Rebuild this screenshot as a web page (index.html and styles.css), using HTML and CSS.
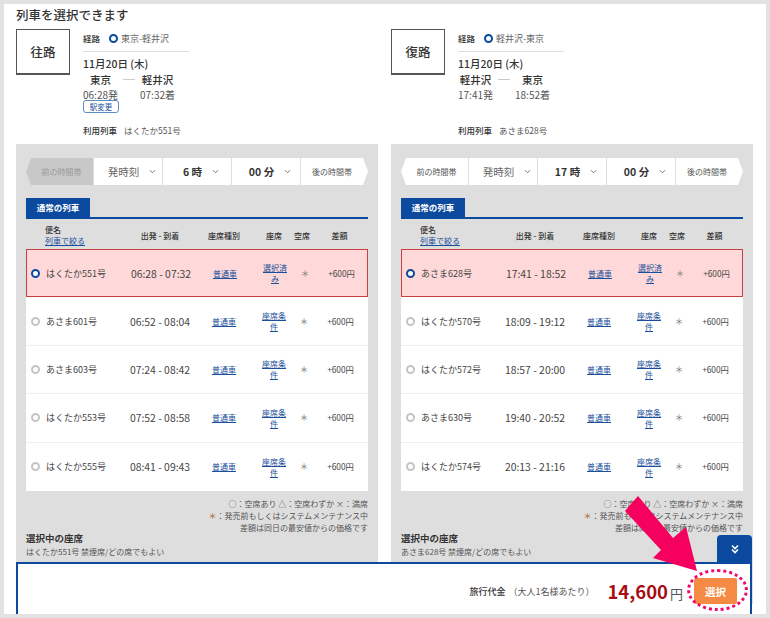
FILE: index.html
```html
<!DOCTYPE html>
<html lang="ja">
<head>
  <meta charset="UTF-8">
  <title>列車を選択できます</title>
  <link rel="stylesheet" href="styles.css">
</head>
<body>
  <div class="page">
    <h1 class="page-title">列車を選択できます</h1>
    <div class="columns">

      <!-- 往路 -->
      <section class="trip">
        <div class="summary">
          <div class="trip-box">往路</div>
          <div class="info">
            <div class="route"><b>経路</b><span class="radio on"></span><span>東京-軽井沢</span></div>
            <div class="date">11月20日 (木)</div>
            <div class="stations">
              <div class="station"><b>東京</b><span>06:28発</span></div>
              <i class="dash"></i>
              <div class="station"><b>軽井沢</b><span>07:32着</span></div>
            </div>
            <div class="change-row"><a class="change">駅変更</a></div>
            <div class="used"><b>利用列車</b><span>はくたか551号</span></div>
          </div>
        </div>
        <div class="panel">
          <div class="time-nav">
            <div class="nav-btn prev off">前の時間帯</div>
            <div class="nav-sel light">発時刻<svg viewBox="0 0 8 5"><path d="M1 1l3 3 3-3"/></svg></div>
            <div class="nav-sel">6 時<svg viewBox="0 0 8 5"><path d="M1 1l3 3 3-3"/></svg></div>
            <div class="nav-sel">00 分<svg viewBox="0 0 8 5"><path d="M1 1l3 3 3-3"/></svg></div>
            <div class="nav-btn next">後の時間帯</div>
          </div>
          <div class="tabs"><div class="tab">通常の列車</div></div>
          <div class="row head">
            <div class="c-name">便名<a>列車で絞る</a></div><div>出発 - 到着</div><div>座席種別</div><div>座席</div><div>空席</div><div>差額</div>
          </div>
          <div class="rows">
            <div class="row train selected">
              <div class="c-name"><span class="radio on"></span>はくたか551号</div><div class="c-time">06:28 - 07:32</div><div><a>普通車</a></div><div class="c-seat"><a>選択済み</a></div><div class="c-mark">＊</div><div class="c-diff">+600円</div>
            </div>
            <div class="row train">
              <div class="c-name"><span class="radio"></span>あさま601号</div><div class="c-time">06:52 - 08:04</div><div><a>普通車</a></div><div class="c-seat"><a>座席条件</a></div><div class="c-mark">＊</div><div class="c-diff">+600円</div>
            </div>
            <div class="row train">
              <div class="c-name"><span class="radio"></span>あさま603号</div><div class="c-time">07:24 - 08:42</div><div><a>普通車</a></div><div class="c-seat"><a>座席条件</a></div><div class="c-mark">＊</div><div class="c-diff">+600円</div>
            </div>
            <div class="row train">
              <div class="c-name"><span class="radio"></span>はくたか553号</div><div class="c-time">07:52 - 08:58</div><div><a>普通車</a></div><div class="c-seat"><a>座席条件</a></div><div class="c-mark">＊</div><div class="c-diff">+600円</div>
            </div>
            <div class="row train">
              <div class="c-name"><span class="radio"></span>はくたか555号</div><div class="c-time">08:41 - 09:43</div><div><a>普通車</a></div><div class="c-seat"><a>座席条件</a></div><div class="c-mark">＊</div><div class="c-diff">+600円</div>
            </div>
          </div>
          <div class="legend">
            <p>○：空席あり △：空席わずか ×：満席</p>
            <p><em>＊</em>：発売前もしくはシステムメンテナンス中</p>
            <p>差額は同日の最安値からの価格です</p>
          </div>
          <div class="current">
            <h3>選択中の座席</h3>
            <p>はくたか551号 禁煙席/どの席でもよい</p>
          </div>
        </div>
      </section>

      <!-- 復路 -->
      <section class="trip">
        <div class="summary">
          <div class="trip-box">復路</div>
          <div class="info">
            <div class="route"><b>経路</b><span class="radio on"></span><span>軽井沢-東京</span></div>
            <div class="date">11月20日 (木)</div>
            <div class="stations">
              <div class="station"><b>軽井沢</b><span>17:41発</span></div>
              <i class="dash"></i>
              <div class="station"><b>東京</b><span>18:52着</span></div>
            </div>
            <div class="change-row"></div>
            <div class="used"><b>利用列車</b><span>あさま628号</span></div>
          </div>
        </div>
        <div class="panel">
          <div class="time-nav">
            <div class="nav-btn prev">前の時間帯</div>
            <div class="nav-sel light">発時刻<svg viewBox="0 0 8 5"><path d="M1 1l3 3 3-3"/></svg></div>
            <div class="nav-sel">17 時<svg viewBox="0 0 8 5"><path d="M1 1l3 3 3-3"/></svg></div>
            <div class="nav-sel">00 分<svg viewBox="0 0 8 5"><path d="M1 1l3 3 3-3"/></svg></div>
            <div class="nav-btn next">後の時間帯</div>
          </div>
          <div class="tabs"><div class="tab">通常の列車</div></div>
          <div class="row head">
            <div class="c-name">便名<a>列車で絞る</a></div><div>出発 - 到着</div><div>座席種別</div><div>座席</div><div>空席</div><div>差額</div>
          </div>
          <div class="rows">
            <div class="row train selected">
              <div class="c-name"><span class="radio on"></span>あさま628号</div><div class="c-time">17:41 - 18:52</div><div><a>普通車</a></div><div class="c-seat"><a>選択済み</a></div><div class="c-mark">＊</div><div class="c-diff">+600円</div>
            </div>
            <div class="row train">
              <div class="c-name"><span class="radio"></span>はくたか570号</div><div class="c-time">18:09 - 19:12</div><div><a>普通車</a></div><div class="c-seat"><a>座席条件</a></div><div class="c-mark">＊</div><div class="c-diff">+600円</div>
            </div>
            <div class="row train">
              <div class="c-name"><span class="radio"></span>はくたか572号</div><div class="c-time">18:57 - 20:00</div><div><a>普通車</a></div><div class="c-seat"><a>座席条件</a></div><div class="c-mark">＊</div><div class="c-diff">+600円</div>
            </div>
            <div class="row train">
              <div class="c-name"><span class="radio"></span>あさま630号</div><div class="c-time">19:40 - 20:52</div><div><a>普通車</a></div><div class="c-seat"><a>座席条件</a></div><div class="c-mark">＊</div><div class="c-diff">+600円</div>
            </div>
            <div class="row train">
              <div class="c-name"><span class="radio"></span>はくたか574号</div><div class="c-time">20:13 - 21:16</div><div><a>普通車</a></div><div class="c-seat"><a>座席条件</a></div><div class="c-mark">＊</div><div class="c-diff">+600円</div>
            </div>
          </div>
          <div class="legend">
            <p>○：空席あり △：空席わずか ×：満席</p>
            <p><em>＊</em>：発売前もしくはシステムメンテナンス中</p>
            <p>差額は同日の最安値からの価格です</p>
          </div>
          <div class="current">
            <h3>選択中の座席</h3>
            <p>あさま628号 禁煙席/どの席でもよい</p>
          </div>
        </div>
      </section>
    </div>

    <!-- 画面下に固定のバー -->
    <div class="toggle"><svg viewBox="0 0 10 10"><path d="M2 1.5l3 3 3-3M2 5.5l3 3 3-3"/></svg></div>
    <div class="price-bar">
      <span class="price-label"><b>旅行代金</b>（大人1名様あたり）</span>
      <span class="price"><b>14,600</b>円</span>
      <button class="select-btn">選択</button>
    </div>
    <div class="ring"></div>
    <svg class="arrow" viewBox="0 0 90 90"><polygon points="11,18 24,3 59,45 72,34 83,78 39,65 47,57"/></svg>
  </div>
</body>
</html>
```

FILE: styles.css
```css
* {
  box-sizing: border-box;
}
html, body {
  margin: 0;
  height: 618px;
  overflow: hidden;
}
body {
  background-color: #e2e2e2;
  font-family: "Noto Sans CJK JP", "Noto Sans", sans-serif;
  color: #333;
  font-size: 10px;
}
p, h1, h3 {
  margin: 0;
}
a {
  color: #1a4f9c;
  text-decoration: underline;
}
.page {
  position: relative;
  margin: 4px;
  height: 610px;
  padding: 0 12px;
  background-color: #fff;
  overflow: hidden;
}
.page-title {
  font-size: 12.5px;
  line-height: 21px;
  font-weight: 500;
  color: #333;
}
.columns {
  display: flex;
  gap: 13px;
}
.trip {
  width: 362px;
}

/* 上の概要 */
.summary {
  display: flex;
  height: 119px;
  padding-top: 4px;
}
.trip-box {
  width: 54px;
  height: 46px;
  border: 1px solid #555;
  border-bottom-width: 2px;
  display: flex;
  align-items: center;
  justify-content: center;
  font-size: 12.5px;
  font-weight: 500;
}
.info {
  margin-left: 13px;
  padding-top: 3px;
}
.route {
  width: 106px;
  height: 20px;
  border-bottom: 1px solid #ddd;
  display: flex;
  align-items: flex-start;
  font-size: 9px;
  line-height: 14px;
  color: #666;
}
.route b {
  color: #333;
  font-weight: 500;
  font-size: 8.5px;
  line-height: 12px;
  width: 26px;
}
.route .radio {
  margin: 2px 3px 0 0;
}
.date {
  margin-top: 4px;
  font-size: 10.5px;
  line-height: 16px;
  font-weight: 500;
}
.stations {
  display: flex;
  align-items: flex-start;
}
.station {
  display: flex;
  flex-direction: column;
  align-items: center;
  width: 35px;
}
.station b {
  font-size: 10.5px;
  line-height: 16px;
  font-weight: 500;
  white-space: nowrap;
}
.station span {
  font-size: 10px;
  line-height: 13px;
  color: #555;
  white-space: nowrap;
}
.dash {
  width: 12px;
  height: 1px;
  margin: 7px 5px 0;
  background-color: #ccc;
}
.change-row {
  height: 14px;
  margin-top: -1px;
}
.change {
  display: block;
  width: 36px;
  height: 13px;
  border: 1px solid #5b8ec9;
  border-radius: 3px;
  text-align: center;
  font-size: 7.5px;
  line-height: 11px;
  color: #1a4f9c;
  text-decoration: none;
}
.used {
  margin-top: 10px;
  font-size: 8.5px;
  line-height: 12px;
  color: #555;
  white-space: nowrap;
}
.used b {
  font-weight: 500;
  color: #333;
  margin-right: 7px;
}

/* グレーのパネル */
.panel {
  height: 460px;
  padding: 14px 10px 0;
  background-color: #dedede;
}
.time-nav {
  display: flex;
  height: 27px;
  gap: 1px;
  margin-bottom: 13px;
}
.nav-btn {
  width: 67px;
  display: flex;
  align-items: center;
  justify-content: center;
  background-color: #fff;
  color: #555;
  font-size: 8px;
}
.prev {
  clip-path: polygon(5px 0, 100% 0, 100% 100%, 5px 100%, 0 50%);
  padding-left: 4px;
}
.next {
  clip-path: polygon(0 0, calc(100% - 5px) 0, 100% 50%, calc(100% - 5px) 100%, 0 100%);
  padding-right: 5px;
}
.off {
  background-color: #c8c8c8;
  color: #999;
}
.nav-sel {
  flex: 1;
  display: flex;
  align-items: center;
  justify-content: center;
  gap: 10px;
  background-color: #fff;
  font-size: 10.5px;
  font-weight: 700;
  padding-left: 8px;
}
.nav-sel.light {
  font-weight: 400;
  color: #666;
}
.nav-sel svg {
  width: 7px;
  height: 5px;
  fill: none;
  stroke: #666;
  stroke-width: 1;
}
.tabs {
  height: 21px;
  border-bottom: 2px solid #0b4a9e;
}
.tab {
  width: 64px;
  height: 19px;
  background-color: #0b4a9e;
  color: #fff;
  text-align: center;
  font-size: 8.5px;
  font-weight: 700;
  line-height: 19px;
}

/* 列車の表 */
.row {
  display: grid;
  grid-template-columns: 102px 64px 64px 36px 24px 52px;
  align-items: center;
  text-align: center;
}
.head {
  height: 30px;
  padding-top: 2px;
  font-size: 8px;
  line-height: 11px;
  font-weight: 500;
}
.head .c-name {
  display: block;
  padding-left: 19px;
  font-size: 8px;
}
.head a {
  display: block;
  font-weight: 400;
}
.head div:nth-child(5) {
  padding-right: 4px;
}
.head div:nth-child(6) {
  padding-right: 5px;
}
.rows {
  background-color: #fff;
}
.train {
  height: 48.4px;
  border-bottom: 1px solid #eee;
  font-size: 8px;
  line-height: 11px;
  color: #444;
}
.train:last-child {
  border-bottom: 0;
}
.train a {
  font-size: 8px;
}
.c-seat a {
  display: block;
  width: 26px;
  margin: 0 auto;
}
.c-mark {
  font-size: 9px;
  color: #777;
}
.c-diff {
  font-size: 8.3px;
  padding-right: 3px;
}
.selected {
  background-color: #ffd9d9;
  border: 1px solid #c8403f;
}
.c-name {
  display: flex;
  align-items: center;
  padding-left: 5px;
  text-align: left;
  font-size: 9px;
  white-space: nowrap;
}
.selected .c-name {
  padding-left: 4px;
}
.c-time {
  font-size: 10.4px;
  white-space: nowrap;
}
.radio {
  display: inline-block;
  flex: none;
  width: 9px;
  height: 9px;
  margin-right: 6px;
  border: 2.5px solid #c4c4c4;
  border-radius: 50%;
  background-color: #fff;
}
.radio.on {
  border-color: #0b4a9e;
}

/* 凡例 */
.legend {
  margin-top: 7px;
  text-align: right;
  font-size: 8px;
  line-height: 12px;
  color: #555;
}
.legend em {
  color: #a5652f;
  font-style: normal;
}
.current {
  margin-top: -3px;
}
.current h3 {
  font-size: 9.5px;
  line-height: 14px;
  font-weight: 700;
}
.current p {
  font-size: 8px;
  line-height: 13px;
  color: #555;
}

/* 下のバー */
.price-bar {
  position: absolute;
  left: 12px;
  top: 558px;
  width: 736px;
  height: 52px;
  display: flex;
  align-items: center;
  justify-content: flex-end;
  padding: 4px 13px 0 0;
  background-color: #fff;
  border: 2px solid #0b4a9e;
  border-bottom: 0;
}
.price-label {
  font-size: 9px;
  color: #555;
  margin-right: 13px;
}
.price-label b {
  font-weight: 500;
  color: #333;
  margin-right: 3px;
}
.price {
  font-size: 13px;
  color: #555;
  margin-right: 11px;
}
.price b {
  font-size: 18.5px;
  font-weight: 700;
  color: #a80d14;
  margin-right: 2px;
}
.select-btn {
  width: 43px;
  height: 26px;
  border: 0;
  border-radius: 2px;
  background-color: #f58a45;
  color: #fff;
  font-family: inherit;
  font-size: 10.5px;
  font-weight: 700;
}
.toggle {
  position: absolute;
  left: 713px;
  top: 531px;
  width: 35px;
  height: 28px;
  border-radius: 4px 4px 0 0;
  background-color: #0b4a9e;
  display: flex;
  align-items: center;
  justify-content: center;
}
.toggle svg {
  width: 10px;
  height: 10px;
  fill: none;
  stroke: #fff;
  stroke-width: 1.6;
}
.ring {
  position: absolute;
  left: 683px;
  top: 565px;
  width: 61px;
  height: 42px;
  border: 3px dotted #f0056b;
  border-radius: 50%;
}
.arrow {
  position: absolute;
  left: 610px;
  top: 489px;
  width: 90px;
  height: 90px;
  fill: #f5005f;
}
```
